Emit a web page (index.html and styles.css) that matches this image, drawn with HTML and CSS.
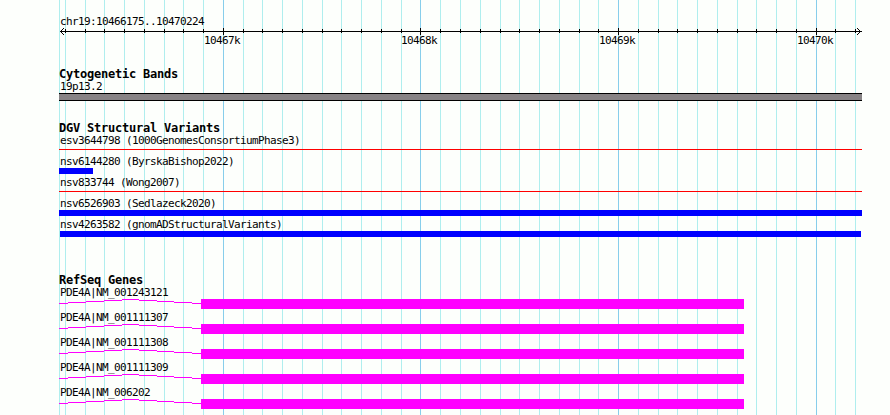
FILE: index.html
```html
<!DOCTYPE html>
<html lang="en">
<head>
<meta charset="utf-8">
<title>chr19:10466175..10470224</title>
<link rel="stylesheet" href="styles.css">
</head>
<body>
<main class="browser">
  <svg class="grid" width="890" height="415" shape-rendering="crispEdges" aria-hidden="true">
    <path class="minor" d="M59.5 0v415M65.5 0v415M85.5 0v415M104.5 0v415M124.5 0v415M144.5 0v415M164.5 0v415M183.5 0v415M203.5 0v415M243.5 0v415M262.5 0v415M282.5 0v415M302.5 0v415M322.5 0v415M341.5 0v415M361.5 0v415M381.5 0v415M401.5 0v415M440.5 0v415M460.5 0v415M480.5 0v415M500.5 0v415M519.5 0v415M539.5 0v415M559.5 0v415M579.5 0v415M598.5 0v415M638.5 0v415M658.5 0v415M677.5 0v415M697.5 0v415M717.5 0v415M737.5 0v415M756.5 0v415M776.5 0v415M796.5 0v415M835.5 0v415M855.5 0v415"/>
    <path class="major" d="M223.5 0v415M420.5 0v415M618.5 0v415M816.5 0v415"/>
  </svg>

  <header class="ruler">
    <div class="label">chr19:10466175..10470224</div>
    <svg class="axis" width="803" height="7" viewBox="59 28 803 7" shape-rendering="crispEdges">
      <path d="M60 31.5h802M85.5 29v4M104.5 29v4M124.5 29v4M144.5 29v4M164.5 29v4M183.5 29v4M203.5 29v4M243.5 29v4M262.5 29v4M282.5 29v4M302.5 29v4M322.5 29v4M341.5 29v4M361.5 29v4M381.5 29v4M401.5 29v4M440.5 29v4M460.5 29v4M480.5 29v4M500.5 29v4M519.5 29v4M539.5 29v4M559.5 29v4M579.5 29v4M598.5 29v4M638.5 29v4M658.5 29v4M677.5 29v4M697.5 29v4M717.5 29v4M737.5 29v4M756.5 29v4M776.5 29v4M796.5 29v4M835.5 29v4M855.5 29v4M65.5 29v4M223.5 28v7M420.5 28v7M618.5 28v7M816.5 28v7"/>
      <path d="M61 30.5h1M62 29.5h1M63 28.5h1M61 32.5h1M62 33.5h1M63 34.5h1M859 30.5h1M858 29.5h1M857 28.5h1M859 32.5h1M858 33.5h1M857 34.5h1"/>
    </svg>
    <div class="ticks"><span>10467k</span><span>10468k</span><span>10469k</span><span>10470k</span></div>
  </header>

  <section class="track bands">
    <h2>Cytogenetic Bands</h2>
    <div class="label">19p13.2</div>
    <div class="band"></div>
  </section>

  <section class="track variants">
    <h2>DGV Structural Variants</h2>
    <div class="row"><div class="label">esv3644798 (1000GenomesConsortiumPhase3)</div><div class="line"></div></div>
    <div class="row"><div class="label">nsv6144280 (ByrskaBishop2022)</div><div class="bar short"></div></div>
    <div class="row"><div class="label">nsv833744 (Wong2007)</div><div class="line"></div></div>
    <div class="row"><div class="label">nsv6526903 (Sedlazeck2020)</div><div class="bar"></div></div>
    <div class="row"><div class="label">nsv4263582 (gnomADStructuralVariants)</div><div class="bar inset"></div></div>
  </section>

  <section class="track genes">
    <h2>RefSeq Genes</h2>
    <svg width="0" height="0" class="defs"><defs><path id="intron" d="M0 4.5h9M9 3.5h18M27 2.5h18M45 1.5h18M63 .5h17M80 1.5h18M98 2.5h17M115 3.5h18M133 4.5h9"/></defs></svg>
    <div class="row"><div class="label">PDE4A|NM_001243121</div><div class="gene"><svg width="142" height="10"><use href="#intron"/></svg><div class="exon"></div></div></div>
    <div class="row"><div class="label">PDE4A|NM_001111307</div><div class="gene"><svg width="142" height="10"><use href="#intron"/></svg><div class="exon"></div></div></div>
    <div class="row"><div class="label">PDE4A|NM_001111308</div><div class="gene"><svg width="142" height="10"><use href="#intron"/></svg><div class="exon"></div></div></div>
    <div class="row"><div class="label">PDE4A|NM_001111309</div><div class="gene"><svg width="142" height="10"><use href="#intron"/></svg><div class="exon"></div></div></div>
    <div class="row"><div class="label">PDE4A|NM_006202</div><div class="gene"><svg width="142" height="10"><use href="#intron"/></svg><div class="exon"></div></div></div>
  </section>
</main>
</body>
</html>
```
FILE: styles.css
```css
* { box-sizing: border-box; }
body {
  margin: 0;
  background: #fdfffc;
  color: #000;
  font: 11px/13px "DejaVu Sans Mono", monospace;
  letter-spacing: -0.622px;
}
svg { display: block; }
.browser {
  position: relative;
  width: 890px;
  height: 415px;
  padding: 15px 28px 0 59px;
  overflow: hidden;
}
.grid { position: absolute; top: 0; left: 0; z-index: -1; }
.grid path { fill: none; stroke-width: 1; }
.minor { stroke: #afeeee; }
.major { stroke: #87ceeb; }
.label { height: 13px; padding-left: 1px; white-space: pre; }
.ruler { height: 52px; }
.axis path { stroke: #000; fill: none; }
.ticks {
  display: grid;
  grid-template-columns: 197px 198px 198px 60px;
  padding-left: 145px;
  margin-top: -1px;
}
h2 {
  height: 13px;
  margin: 0;
  font-size: 12px;
  line-height: 14px;
  letter-spacing: -0.224px;
  white-space: pre;
}
.bands { height: 54px; }
.band {
  height: 8px;
  background: #878385;
  border: solid #000;
  border-width: 1px 0;
}
.variants { height: 152px; }
.variants .row { height: 21px; }
.line { height: 1px; margin-top: 2px; background: #f00; }
.bar { height: 6px; background: #00f; }
.short { width: 34px; }
.inset { margin-left: 1px; margin-right: 1px; }
.defs { height: 0; }
.genes .row { height: 25px; }
.gene { display: flex; }
.gene svg { stroke: #f0f; shape-rendering: crispEdges; }
.exon { width: 543px; height: 10px; background: #f0f; }
```
